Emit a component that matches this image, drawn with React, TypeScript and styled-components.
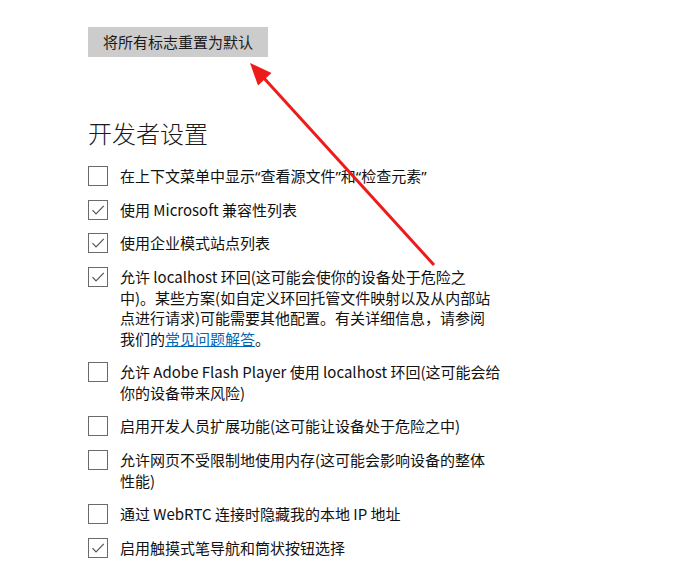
import { FC, ReactNode } from "react";
import styled, { createGlobalStyle } from "styled-components";

const GlobalStyle = createGlobalStyle`
    html, body {
        margin: 0;
        padding: 0;
        background: #ffffff;
    }

    body {
        font-family: "Noto Sans CJK SC", "Noto Sans", sans-serif;
        color: #000000;
    }
`;

const Page = styled.div`
    position: relative;
    width: 698px;
    height: 585px;
    overflow: hidden;
    box-sizing: border-box;
    padding: 27px 0 0 88px;
`;

const ResetButton = styled.button`
    display: block;
    height: 30px;
    padding: 0 15px;
    border: none;
    background: #cccccc;
    font-family: inherit;
    font-size: 15px;
    line-height: 30px;
    color: #1a1a1a;
    cursor: pointer;
`;

const Heading = styled.h2`
    margin: 60px 0 0;
    font-size: 24px;
    font-weight: 300;
    line-height: 32px;
    color: #1a1a1a;
`;

const OptionList = styled.div`
    display: flex;
    flex-direction: column;
    gap: 13.2px;
    margin-top: 17px;
`;

const OptionRow = styled.label`
    display: flex;
    align-items: flex-start;
    gap: 12px;
`;

const Box = styled.span<{ $checked: boolean }>`
    flex: none;
    width: 20px;
    height: 20px;
    box-sizing: border-box;
    border: 1.5px solid #6a6a6a;
    background: #ffffff;
    display: flex;
    align-items: center;
    justify-content: center;

    svg {
        display: ${props => (props.$checked ? "block" : "none")};
    }
`;

const OptionText = styled.span`
    font-size: 15px;
    line-height: 20.5px;
    white-space: nowrap;
    color: #111111;
`;

/* narrow curly quotes, as the original UI font draws them */
const Quote = styled.span`
    font-family: "Noto Sans", sans-serif;
`;

const FaqLink = styled.a`
    color: #0067b8;
    text-decoration: underline;
`;

const ArrowLayer = styled.svg`
    position: absolute;
    left: 0;
    top: 0;
    pointer-events: none;
`;

interface IOption {
    checked: boolean;
    text: ReactNode;
}

const options: IOption[] = [
    {
        checked: false,
        text: (
            <>
                在上下文菜单中显示<Quote>“</Quote>查看源文件<Quote>”</Quote>和<Quote>“</Quote>检查元素
                <Quote>”</Quote>
            </>
        ),
    },
    { checked: true, text: "使用 Microsoft 兼容性列表" },
    { checked: true, text: "使用企业模式站点列表" },
    {
        checked: true,
        text: (
            <>
                允许 localhost 环回(这可能会使你的设备处于危险之
                <br />
                中)。某些方案(如自定义环回托管文件映射以及从内部站
                <br />
                点进行请求)可能需要其他配置。有关详细信息，请参阅
                <br />
                我们的<FaqLink href='#'>常见问题解答</FaqLink>。
            </>
        ),
    },
    {
        checked: false,
        text: (
            <>
                允许 Adobe Flash Player 使用 localhost 环回(这可能会给
                <br />
                你的设备带来风险)
            </>
        ),
    },
    { checked: false, text: "启用开发人员扩展功能(这可能让设备处于危险之中)" },
    {
        checked: false,
        text: (
            <>
                允许网页不受限制地使用内存(这可能会影响设备的整体
                <br />
                性能)
            </>
        ),
    },
    { checked: false, text: "通过 WebRTC 连接时隐藏我的本地 IP 地址" },
    { checked: true, text: "启用触摸式笔导航和筒状按钮选择" },
];

const Checkbox: FC<{ checked: boolean }> = ({ checked }) => (
    <Box $checked={checked}>
        <svg width='14' height='12' viewBox='0 0 14 12'>
            <path d='M1.5 6.2 L5 9.8 L12.8 1.8' fill='none' stroke='#555555' strokeWidth='1.2' />
        </svg>
    </Box>
);

const App: FC = () => {
    return (
        <Page>
            <GlobalStyle />
            <ResetButton>将所有标志重置为默认</ResetButton>
            <Heading>开发者设置</Heading>
            <OptionList>
                {options.map((option, i) => (
                    <OptionRow key={i}>
                        <Checkbox checked={option.checked} />
                        <OptionText>{option.text}</OptionText>
                    </OptionRow>
                ))}
            </OptionList>
            {/* red annotation arrow pointing at the reset button */}
            <ArrowLayer width='698' height='585' viewBox='0 0 698 585'>
                <line x1='434' y1='265' x2='262' y2='76' stroke='#ee1b1b' strokeWidth='3' />
                <polygon points='250,63 271.5,73 258,85.5' fill='#ee1b1b' />
            </ArrowLayer>
        </Page>
    );
};

export default App;
